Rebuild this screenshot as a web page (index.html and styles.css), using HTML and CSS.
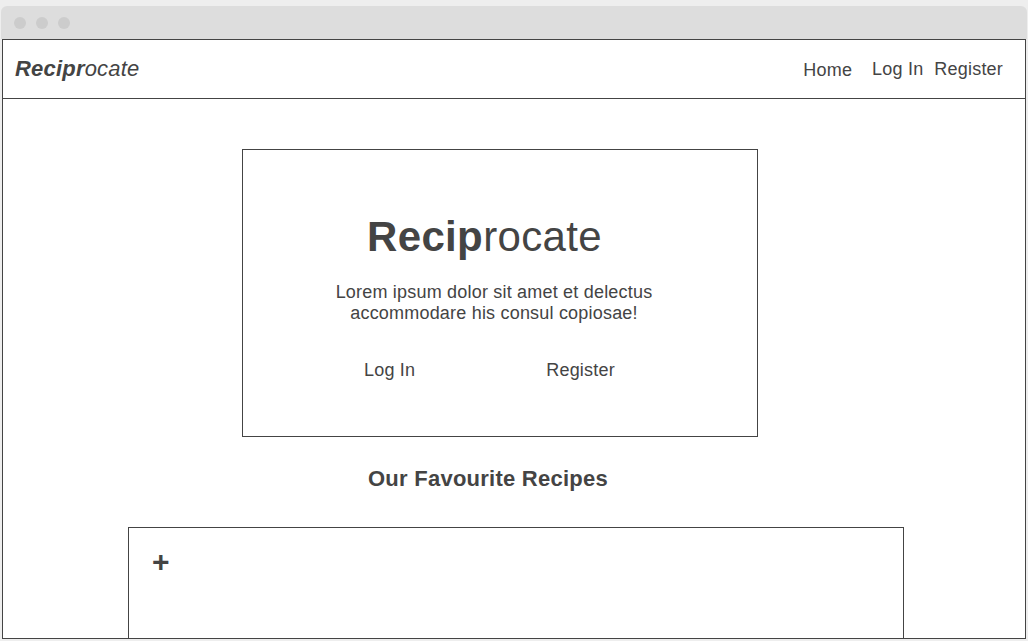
FILE: index.html
```html
<!DOCTYPE html>
<html>
<head>
<meta charset="utf-8">
<link rel="stylesheet" href="styles.css">
</head>
<body>
<div class="window">
  <div class="titlebar">
    <span class="dot"></span><span class="dot"></span><span class="dot"></span>
  </div>
  <div class="browser">
    <nav class="nav">
      <div class="logo"><b>Recipr</b>ocate</div>
      <div class="links">
        <a class="link home">Home</a>
        <a class="link login">Log In</a>
        <a class="link register">Register</a>
      </div>
    </nav>
    <section class="hero">
      <h1 class="hero-title"><b>Recip</b>rocate</h1>
      <p class="hero-text">Lorem ipsum dolor sit amet et delectus accommodare his consul copiosae!</p>
      <div class="hero-actions">
        <a class="hero-btn">Log In</a>
        <a class="hero-btn">Register</a>
      </div>
    </section>
    <h2 class="section-title">Our Favourite Recipes</h2>
    <div class="card">
      <span class="plus">+</span>
    </div>
  </div>
</div>
</body>
</html>
```
FILE: styles.css
```css
html, body {
  margin: 0;
  padding: 0;
  background: #eeeeee;
  font-family: "Liberation Sans", Arial, sans-serif;
  color: #444444;
  letter-spacing: 0.2px;
}

.window {
  padding: 6px 1px 0;
}

.titlebar {
  height: 33px;
  background: #dddddd;
  border-radius: 6px 6px 0 0;
  display: flex;
  align-items: center;
  gap: 10px;
  padding-left: 13px;
  box-sizing: border-box;
}

.dot {
  width: 12px;
  height: 12px;
  border-radius: 50%;
  background: #cccccc;
}

.browser {
  margin: 0 1px;
  height: 600px;
  box-sizing: border-box;
  border: 1px solid #444444;
  background: #ffffff;
  overflow: hidden;
}

.nav {
  height: 58px;
  border-bottom: 1px solid #444444;
  display: flex;
  align-items: center;
  justify-content: space-between;
  padding: 0 22px 0 12px;
}

.logo {
  font-size: 22px;
  font-style: italic;
  line-height: 25px;
  position: relative;
  top: -1px;
}

.links {
  display: flex;
  align-items: center;
  font-size: 18px;
  line-height: 21px;
}

.link {
  color: #444444;
}

.home {
  margin-right: 20px;
  position: relative;
  top: 1px;
}

.login {
  margin-right: 11px;
}

.hero {
  margin: 50px 0 0 239px;
  width: 516px;
  height: 288px;
  box-sizing: border-box;
  border: 1px solid #444444;
  padding-top: 63px;
}

.hero-title {
  margin: 0 0 0 124px;
  font-size: 42px;
  line-height: 48px;
  font-weight: normal;
  letter-spacing: 0.35px;
}

.hero-text {
  margin: 21px 0 0 81px;
  width: 340px;
  font-size: 18px;
  line-height: 21px;
  text-align: center;
}

.hero-actions {
  margin: 36px 0 0 121px;
  display: flex;
  gap: 131px;
  font-size: 18px;
  line-height: 21px;
}

.section-title {
  margin: 29px 0 0 365px;
  font-size: 22px;
  line-height: 25px;
  font-weight: bold;
  letter-spacing: 0.25px;
}

.card {
  margin: 36px 0 0 125px;
  width: 776px;
  height: 200px;
  box-sizing: border-box;
  border: 1px solid #444444;
  padding: 19px 0 0 23px;
}

.plus {
  display: block;
  font-size: 30px;
  line-height: 30px;
  font-weight: bold;
  letter-spacing: 0;
}
```
